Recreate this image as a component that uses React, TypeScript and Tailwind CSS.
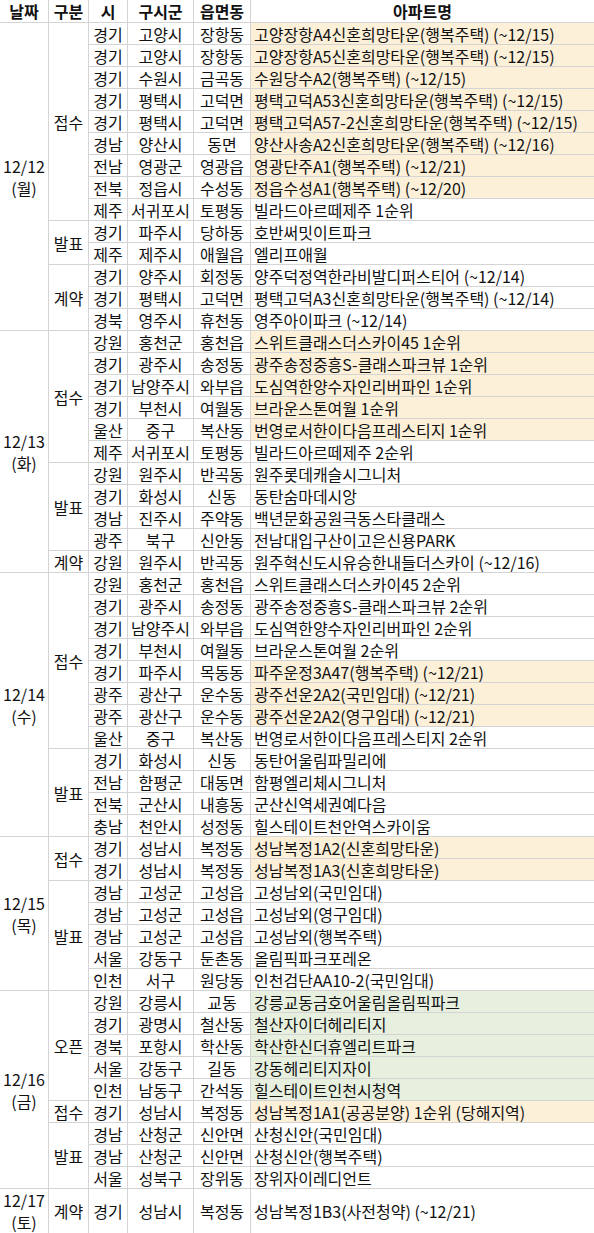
import React from 'react';

type Row = [string, string, string, string, ('o' | 'g' | '')?];

interface Category {
  name: string;
  rows: Row[];
}

interface DayGroup {
  date: string;
  day: string;
  tall?: boolean;
  cats: Category[];
}

const DATA: DayGroup[] = [
  {
    date: '12/12',
    day: '(월)',
    cats: [
      {
        name: '접수',
        rows: [
          ['경기', '고양시', '장항동', '고양장항A4신혼희망타운(행복주택) (~12/15)', 'o'],
          ['경기', '고양시', '장항동', '고양장항A5신혼희망타운(행복주택) (~12/15)', 'o'],
          ['경기', '수원시', '금곡동', '수원당수A2(행복주택) (~12/15)', 'o'],
          ['경기', '평택시', '고덕면', '평택고덕A53신혼희망타운(행복주택) (~12/15)', 'o'],
          ['경기', '평택시', '고덕면', '평택고덕A57-2신혼희망타운(행복주택) (~12/15)', 'o'],
          ['경남', '양산시', '동면', '양산사송A2신혼희망타운(행복주택) (~12/16)', 'o'],
          ['전남', '영광군', '영광읍', '영광단주A1(행복주택) (~12/21)', 'o'],
          ['전북', '정읍시', '수성동', '정읍수성A1(행복주택) (~12/20)', 'o'],
          ['제주', '서귀포시', '토평동', '빌라드아르떼제주 1순위'],
        ],
      },
      {
        name: '발표',
        rows: [
          ['경기', '파주시', '당하동', '호반써밋이트파크'],
          ['제주', '제주시', '애월읍', '엘리프애월'],
        ],
      },
      {
        name: '계약',
        rows: [
          ['경기', '양주시', '회정동', '양주덕정역한라비발디퍼스티어 (~12/14)'],
          ['경기', '평택시', '고덕면', '평택고덕A3신혼희망타운(행복주택) (~12/14)'],
          ['경북', '영주시', '휴천동', '영주아이파크 (~12/14)'],
        ],
      },
    ],
  },
  {
    date: '12/13',
    day: '(화)',
    cats: [
      {
        name: '접수',
        rows: [
          ['강원', '홍천군', '홍천읍', '스위트클래스더스카이45 1순위', 'o'],
          ['경기', '광주시', '송정동', '광주송정중흥S-클래스파크뷰 1순위', 'o'],
          ['경기', '남양주시', '와부읍', '도심역한양수자인리버파인 1순위', 'o'],
          ['경기', '부천시', '여월동', '브라운스톤여월 1순위', 'o'],
          ['울산', '중구', '복산동', '번영로서한이다음프레스티지 1순위', 'o'],
          ['제주', '서귀포시', '토평동', '빌라드아르떼제주 2순위'],
        ],
      },
      {
        name: '발표',
        rows: [
          ['강원', '원주시', '반곡동', '원주롯데캐슬시그니처'],
          ['경기', '화성시', '신동', '동탄숨마데시앙'],
          ['경남', '진주시', '주약동', '백년문화공원극동스타클래스'],
          ['광주', '북구', '신안동', '전남대입구산이고은신용PARK'],
        ],
      },
      {
        name: '계약',
        rows: [['강원', '원주시', '반곡동', '원주혁신도시유승한내들더스카이 (~12/16)']],
      },
    ],
  },
  {
    date: '12/14',
    day: '(수)',
    cats: [
      {
        name: '접수',
        rows: [
          ['강원', '홍천군', '홍천읍', '스위트클래스더스카이45 2순위'],
          ['경기', '광주시', '송정동', '광주송정중흥S-클래스파크뷰 2순위'],
          ['경기', '남양주시', '와부읍', '도심역한양수자인리버파인 2순위'],
          ['경기', '부천시', '여월동', '브라운스톤여월 2순위'],
          ['경기', '파주시', '목동동', '파주운정3A47(행복주택) (~12/21)', 'o'],
          ['광주', '광산구', '운수동', '광주선운2A2(국민임대) (~12/21)', 'o'],
          ['광주', '광산구', '운수동', '광주선운2A2(영구임대) (~12/21)', 'o'],
          ['울산', '중구', '복산동', '번영로서한이다음프레스티지 2순위'],
        ],
      },
      {
        name: '발표',
        rows: [
          ['경기', '화성시', '신동', '동탄어울림파밀리에'],
          ['전남', '함평군', '대동면', '함평엘리체시그니처'],
          ['전북', '군산시', '내흥동', '군산신역세권예다음'],
          ['충남', '천안시', '성정동', '힐스테이트천안역스카이움'],
        ],
      },
    ],
  },
  {
    date: '12/15',
    day: '(목)',
    cats: [
      {
        name: '접수',
        rows: [
          ['경기', '성남시', '복정동', '성남복정1A2(신혼희망타운)', 'o'],
          ['경기', '성남시', '복정동', '성남복정1A3(신혼희망타운)', 'o'],
        ],
      },
      {
        name: '발표',
        rows: [
          ['경남', '고성군', '고성읍', '고성남외(국민임대)'],
          ['경남', '고성군', '고성읍', '고성남외(영구임대)'],
          ['경남', '고성군', '고성읍', '고성남외(행복주택)'],
          ['서울', '강동구', '둔촌동', '올림픽파크포레온'],
          ['인천', '서구', '원당동', '인천검단AA10-2(국민임대)'],
        ],
      },
    ],
  },
  {
    date: '12/16',
    day: '(금)',
    cats: [
      {
        name: '오픈',
        rows: [
          ['강원', '강릉시', '교동', '강릉교동금호어울림올림픽파크', 'g'],
          ['경기', '광명시', '철산동', '철산자이더헤리티지', 'g'],
          ['경북', '포항시', '학산동', '학산한신더휴엘리트파크', 'g'],
          ['서울', '강동구', '길동', '강동헤리티지자이', 'g'],
          ['인천', '남동구', '간석동', '힐스테이트인천시청역', 'g'],
        ],
      },
      {
        name: '접수',
        rows: [['경기', '성남시', '복정동', '성남복정1A1(공공분양) 1순위 (당해지역)', 'o']],
      },
      {
        name: '발표',
        rows: [
          ['경남', '산청군', '신안면', '산청신안(국민임대)'],
          ['경남', '산청군', '신안면', '산청신안(행복주택)'],
          ['서울', '성북구', '장위동', '장위자이레디언트'],
        ],
      },
    ],
  },
  {
    date: '12/17',
    day: '(토)',
    tall: true,
    cats: [
      {
        name: '계약',
        rows: [['경기', '성남시', '복정동', '성남복정1B3(사전청약) (~12/21)']],
      },
    ],
  },
];

const base = 'border border-[#d4d4d4] p-0 text-center align-middle whitespace-nowrap';
const cell = `${base} leading-[18px]`;

const App: React.FC = () => {
  return (
    <div className="w-[594px] h-[1233px] overflow-hidden bg-white text-[16px] text-[#111] font-['Noto_Sans_CJK_KR','Noto_Sans',sans-serif]">
      <table className="w-[596px] -ml-px -mt-px border-collapse table-fixed">
        <colgroup>
          <col className="w-[49px]" />
          <col className="w-[40px]" />
          <col className="w-[39px]" />
          <col className="w-[66px]" />
          <col className="w-[57px]" />
          <col />
        </colgroup>
        <thead>
          <tr className="h-[23px]">
            <th className={`${cell} font-bold`}>날짜</th>
            <th className={`${cell} font-bold`}>구분</th>
            <th className={`${cell} font-bold`}>시</th>
            <th className={`${cell} font-bold`}>구시군</th>
            <th className={`${cell} font-bold`}>읍면동</th>
            <th className={`${cell} font-bold`}>아파트명</th>
          </tr>
        </thead>
        <tbody>
          {DATA.map(group => {
            const total = group.cats.reduce((n, c) => n + c.rows.length, 0);
            return group.cats.map((cat, ci) =>
              cat.rows.map((row, ri) => {
                const [si, gu, dong, apt, hl] = row;
                const bg = hl === 'o' ? 'bg-[#fdf0d9]' : hl === 'g' ? 'bg-[#e7f0df]' : '';
                return (
                  <tr key={`${group.date}-${ci}-${ri}`} className={group.tall ? 'h-[45px]' : 'h-[22px]'}>
                    {ci === 0 && ri === 0 && (
                      <td rowSpan={total} className={base}>
                        <div className="flex flex-col items-center gap-[2px] leading-[20px]">
                          <span>{group.date}</span>
                          <span>{group.day}</span>
                        </div>
                      </td>
                    )}
                    {ri === 0 && (
                      <td rowSpan={cat.rows.length} className={cell}>
                        {cat.name}
                      </td>
                    )}
                    <td className={cell}>{si}</td>
                    <td className={cell}>{gu}</td>
                    <td className={cell}>{dong}</td>
                    <td className={`${cell} text-left pl-[3px] ${bg}`}>{apt}</td>
                  </tr>
                );
              })
            );
          })}
        </tbody>
      </table>
    </div>
  );
};

export default App;
